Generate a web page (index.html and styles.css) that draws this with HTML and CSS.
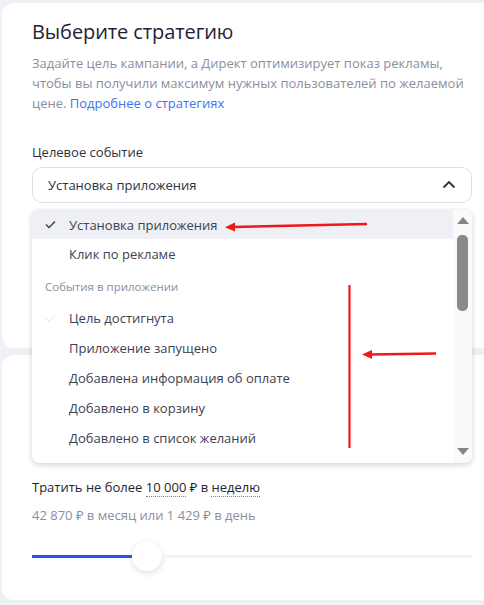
FILE: index.html
```html
<!DOCTYPE html>
<html lang="ru">
<head>
<meta charset="utf-8">
<link rel="stylesheet" href="styles.css">
</head>
<body>
<div class="page">
  <section class="card card-strategy">
    <h1 class="title">Выберите стратегию</h1>
    <p class="desc">Задайте цель кампании, а Директ оптимизирует показ рекламы, чтобы вы получили максимум нужных пользователей по желаемой цене. <a class="link" href="#">Подробнее о стратегиях</a></p>
    <div class="field-label">Целевое событие</div>
    <div class="select-wrap">
      <div class="select">
        <span>Установка приложения</span>
        <svg class="chev" width="14" height="9" viewBox="0 0 14 9"><path d="M1.5 7.5 L7 2 L12.5 7.5" fill="none" stroke="#2b3140" stroke-width="1.8"/></svg>
      </div>
      <div class="menu">
        <div class="menu-list">
          <div class="item selected"><span class="check">
            <svg width="11" height="9" viewBox="0 0 11 9"><path d="M1 4.5 L4 7.5 L10 1.5" fill="none" stroke="#3b4254" stroke-width="1.5"/></svg></span>Установка приложения</div>
          <div class="item"><span class="check"></span>Клик по рекламе</div>
          <div class="group">События в приложении</div>
          <div class="item"><span class="check">
            <svg width="11" height="9" viewBox="0 0 11 9"><path d="M1 4.5 L4 7.5 L10 1.5" fill="none" stroke="#eceef3" stroke-width="1.5"/></svg></span>Цель достигнута</div>
          <div class="item"><span class="check"></span>Приложение запущено</div>
          <div class="item"><span class="check"></span>Добавлена информация об оплате</div>
          <div class="item"><span class="check"></span>Добавлено в корзину</div>
          <div class="item"><span class="check"></span>Добавлено в список желаний</div>
          <div class="item"><span class="check"></span>Достигнут уровень</div>
        </div>
        <div class="scrollbar">
          <div class="arrow-up"></div>
          <div class="thumb"></div>
          <div class="track-space"></div>
          <div class="arrow-down"></div>
        </div>
      </div>
    </div>
  </section>
  <section class="card card-budget">
    <div class="budget-line">Тратить не более <span class="dotted">10 000</span> ₽ в <span class="dotted">неделю</span></div>
    <div class="budget-sub">42 870 ₽ в месяц или 1 429 ₽ в день</div>
    <div class="slider">
      <div class="slider-fill"></div>
      <div class="slider-thumb"></div>
      <div class="slider-rest"></div>
    </div>
  </section>
</div>
<svg class="annot" width="484" height="605" viewBox="0 0 484 605">
  <line x1="367" y1="224" x2="232" y2="227" stroke="#f01818" stroke-width="2.6"/>
  <polygon points="225,227.2 235,222.5 235,231.5" fill="#f01818"/>
  <line x1="349.5" y1="285" x2="349.5" y2="448" stroke="#f01818" stroke-width="2.2"/>
  <line x1="436" y1="353.5" x2="370" y2="354.5" stroke="#f01818" stroke-width="2.6"/>
  <polygon points="362,354.6 372,350 372,359" fill="#f01818"/>
</svg>
</body>
</html>
```
FILE: styles.css
```css
* { box-sizing: border-box; }
html, body {
  margin: 0;
  padding: 0;
  background: #eff1f6;
  overflow: hidden;
  width: 484px;
  height: 605px;
}
body {
  font-family: "Open Sans", "Noto Sans", sans-serif;
  color: #2b3140;
  position: relative;
}
.page {
  padding: 3px 0 0 2px;
  display: flex;
  flex-direction: column;
  gap: 7px;
  width: 520px;
}
.card {
  background: #fff;
  border-radius: 12px;
  padding: 0 30px;
}
.card-strategy {
  height: 345px;
  padding-top: 16px;
}
.title {
  margin: 0;
  font-size: 20px;
  line-height: 26px;
  font-weight: 500;
  color: #1f2433;
  letter-spacing: -0.1px;
}
.desc {
  margin: 8px 0 0;
  width: 440px;
  font-size: 13px;
  line-height: 20px;
  color: #8a8f9f;
}
.link { color: #3d73f0; text-decoration: none; }
.field-label {
  margin-top: 30px;
  font-size: 13px;
  line-height: 18px;
  color: #2b3140;
}
.select-wrap {
  position: relative;
  width: 440px;
  margin-top: 6px;
}
.select {
  height: 36px;
  border: 1px solid #dcdfe7;
  border-radius: 10px;
  display: flex;
  align-items: center;
  justify-content: space-between;
  padding: 0 15px 0 15px;
  font-size: 13px;
  color: #2b3140;
}
.chev { margin-top: -1px; }
.menu {
  position: absolute;
  top: 43px;
  left: 0;
  width: 440px;
  height: 253px;
  background: #fff;
  border-radius: 7px;
  box-shadow: 0 2px 6px rgba(30, 35, 50, 0.18), 0 0 1px rgba(30,35,50,0.15);
  display: flex;
  overflow: hidden;
  z-index: 2;
}
.menu-list {
  flex: 1;
  overflow: hidden;
}
.item {
  height: 30px;
  display: flex;
  align-items: center;
  font-size: 13px;
  color: #3b4254;
}
.item.selected { background: #eef0f5; height: 29px; }
.check {
  width: 37px;
  padding-left: 13px;
  display: flex;
  align-items: center;
}
.group {
  height: 34px;
  display: flex;
  align-items: center;
  padding-left: 13px;
  font-size: 11.5px;
  color: #8a8f9f;
}
.scrollbar {
  width: 19px;
  background: #fafafa;
  display: flex;
  flex-direction: column;
  align-items: center;
  padding: 7px 0 8px;
}
.arrow-up {
  width: 0; height: 0;
  border-left: 6px solid transparent;
  border-right: 6px solid transparent;
  border-bottom: 7px solid #858585;
}
.thumb {
  margin-top: 11px;
  width: 11px;
  height: 76px;
  border-radius: 5px;
  background: #898989;
}
.track-space { flex: 1; }
.arrow-down {
  width: 0; height: 0;
  border-left: 6px solid transparent;
  border-right: 6px solid transparent;
  border-top: 7px solid #858585;
}
.card-budget {
  height: 245px;
  padding-top: 123px;
}
.budget-line {
  font-size: 13px;
  line-height: 18px;
  color: #1f2433;
}
.dotted {
  border-bottom: 1px dotted #7c8292;
}
.budget-sub {
  margin-top: 10px;
  font-size: 13px;
  line-height: 18px;
  color: #8a8f9f;
}
.slider {
  margin-top: 17px;
  width: 440px;
  display: flex;
  align-items: center;
  height: 30px;
}
.slider-fill {
  width: 100px;
  height: 3px;
  background: #2a52f5;
}
.slider-thumb {
  width: 30px;
  height: 30px;
  border-radius: 50%;
  background: #fff;
  box-shadow: 0 2px 6px rgba(30, 35, 50, 0.15);
}
.slider-rest {
  flex: 1;
  height: 3px;
  background: #f2f3f8;
}
.annot {
  position: absolute;
  top: 0;
  left: 0;
  z-index: 5;
  pointer-events: none;
}
```
